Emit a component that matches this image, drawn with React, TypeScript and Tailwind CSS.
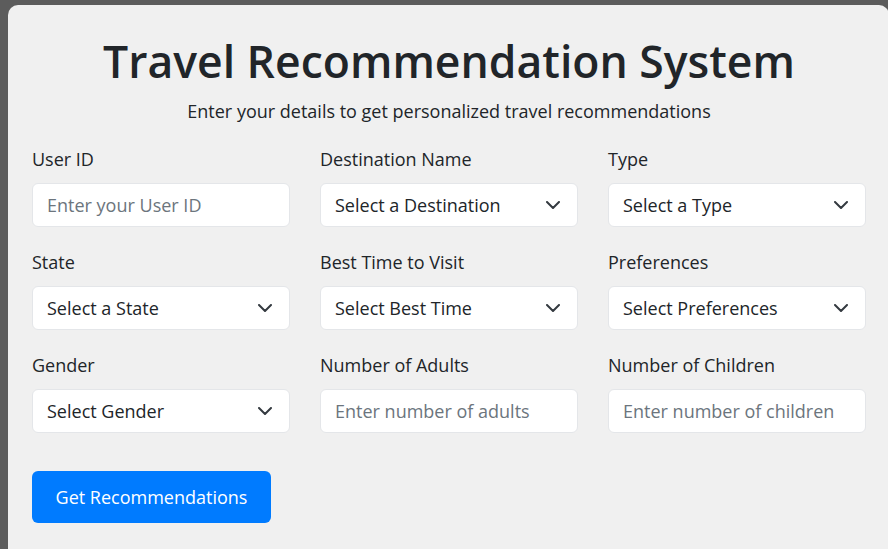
import React from "react";

const font = { fontFamily: '"Open Sans", "Noto Sans", sans-serif' };

function Chevron() {
  return (
    <svg width="14" height="8" viewBox="0 0 14 8" fill="none" className="shrink-0">
      <polyline points="1,1 7,7 13,1" stroke="#343a40" strokeWidth="2" strokeLinecap="round" strokeLinejoin="round" />
    </svg>
  );
}

function Field({ label, placeholder, select }: { label: string; placeholder: string; select?: boolean }) {
  return (
    <div className="flex flex-col">
      <div className="text-[18px] leading-[27px] text-[#212529] mb-[10px]">{label}</div>
      <div className="h-[44px] bg-white rounded-[6px] border border-[#e4e6e9] flex items-center justify-between pl-[14px] pr-[17px]">
        <span className={"text-[18px] " + (select ? "text-[#212529]" : "text-[#6c757d]")}>{placeholder}</span>
        {select && <Chevron />}
      </div>
    </div>
  );
}

export default function App() {
  return (
    <div className="w-[888px] h-[549px] bg-[#5c5c5c] pt-[5px] pl-[8px] overflow-hidden" style={font}>
      <div className="w-[881px] h-[560px] bg-[#f0f0f0] rounded-[10px] pl-[24px] pr-[23px] pt-[26px]">
        <h1 className="text-center text-[44.5px] leading-[60px] font-semibold text-[#212529]">Travel Recommendation System</h1>
        <p className="text-center text-[18px] leading-[28px] text-[#212529] mt-[6px]">
          Enter your details to get personalized travel recommendations
        </p>
        <div className="grid grid-cols-3 gap-x-[30px] gap-y-[22px] mt-[21px]">
          <Field label="User ID" placeholder="Enter your User ID" />
          <Field label="Destination Name" placeholder="Select a Destination" select />
          <Field label="Type" placeholder="Select a Type" select />
          <Field label="State" placeholder="Select a State" select />
          <Field label="Best Time to Visit" placeholder="Select Best Time" select />
          <Field label="Preferences" placeholder="Select Preferences" select />
          <Field label="Gender" placeholder="Select Gender" select />
          <Field label="Number of Adults" placeholder="Enter number of adults" />
          <Field label="Number of Children" placeholder="Enter number of children" />
        </div>
        <button className="mt-[38px] w-[239px] h-[52px] bg-[#007bff] rounded-[6px] text-white text-[18px]">
          Get Recommendations
        </button>
      </div>
    </div>
  );
}
